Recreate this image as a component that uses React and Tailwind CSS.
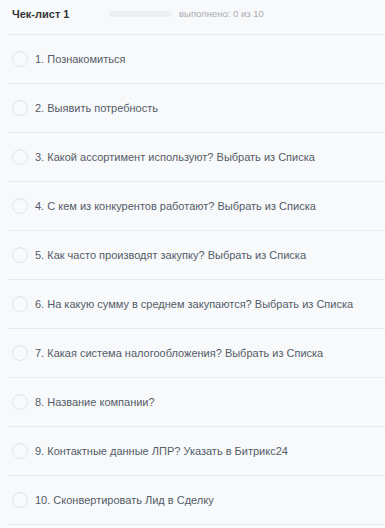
import React from "react";

const items = [
  "1. Познакомиться",
  "2. Выявить потребность",
  "3. Какой ассортимент используют? Выбрать из Списка",
  "4. С кем из конкурентов работают? Выбрать из Списка",
  "5. Как часто производят закупку? Выбрать из Списка",
  "6. На какую сумму в среднем закупаются? Выбрать из Списка",
  "7. Какая система налогообложения? Выбрать из Списка",
  "8. Название компании?",
  "9. Контактные данные ЛПР? Указать в Битрикс24",
  "10. Сконвертировать Лид в Сделку",
];

export default function App() {
  return (
    <div
      className="w-[385px] h-[528px] overflow-hidden bg-[#f8f9fa]"
      style={{ fontFamily: '"Liberation Sans", Arial, sans-serif' }}
    >
      <div className="ml-2 h-[35px] flex items-center border-b border-[#e8eaec] pb-[6px]">
        <div className="w-[101px] pl-1 text-[11px] font-bold text-[#333]">Чек-лист 1</div>
        <div className="w-[63px] h-[6px] rounded-full bg-[#eceef0]"></div>
        <div className="ml-[7px] text-[9.5px] text-[#a8adb3]">выполнено: 0 из 10</div>
      </div>
      {items.map((t) => (
        <div key={t} className="ml-2 h-[49px] flex items-center border-b border-[#e8eaec]">
          <div className="ml-1 w-4 h-4 rounded-full border border-[#e3e5e8] bg-[#f9fafb] shadow-[inset_0_1px_1px_rgba(0,0,0,0.04)]"></div>
          <div className="ml-[7px] text-[11px] text-[#535c69]">{t}</div>
        </div>
      ))}
    </div>
  );
}
